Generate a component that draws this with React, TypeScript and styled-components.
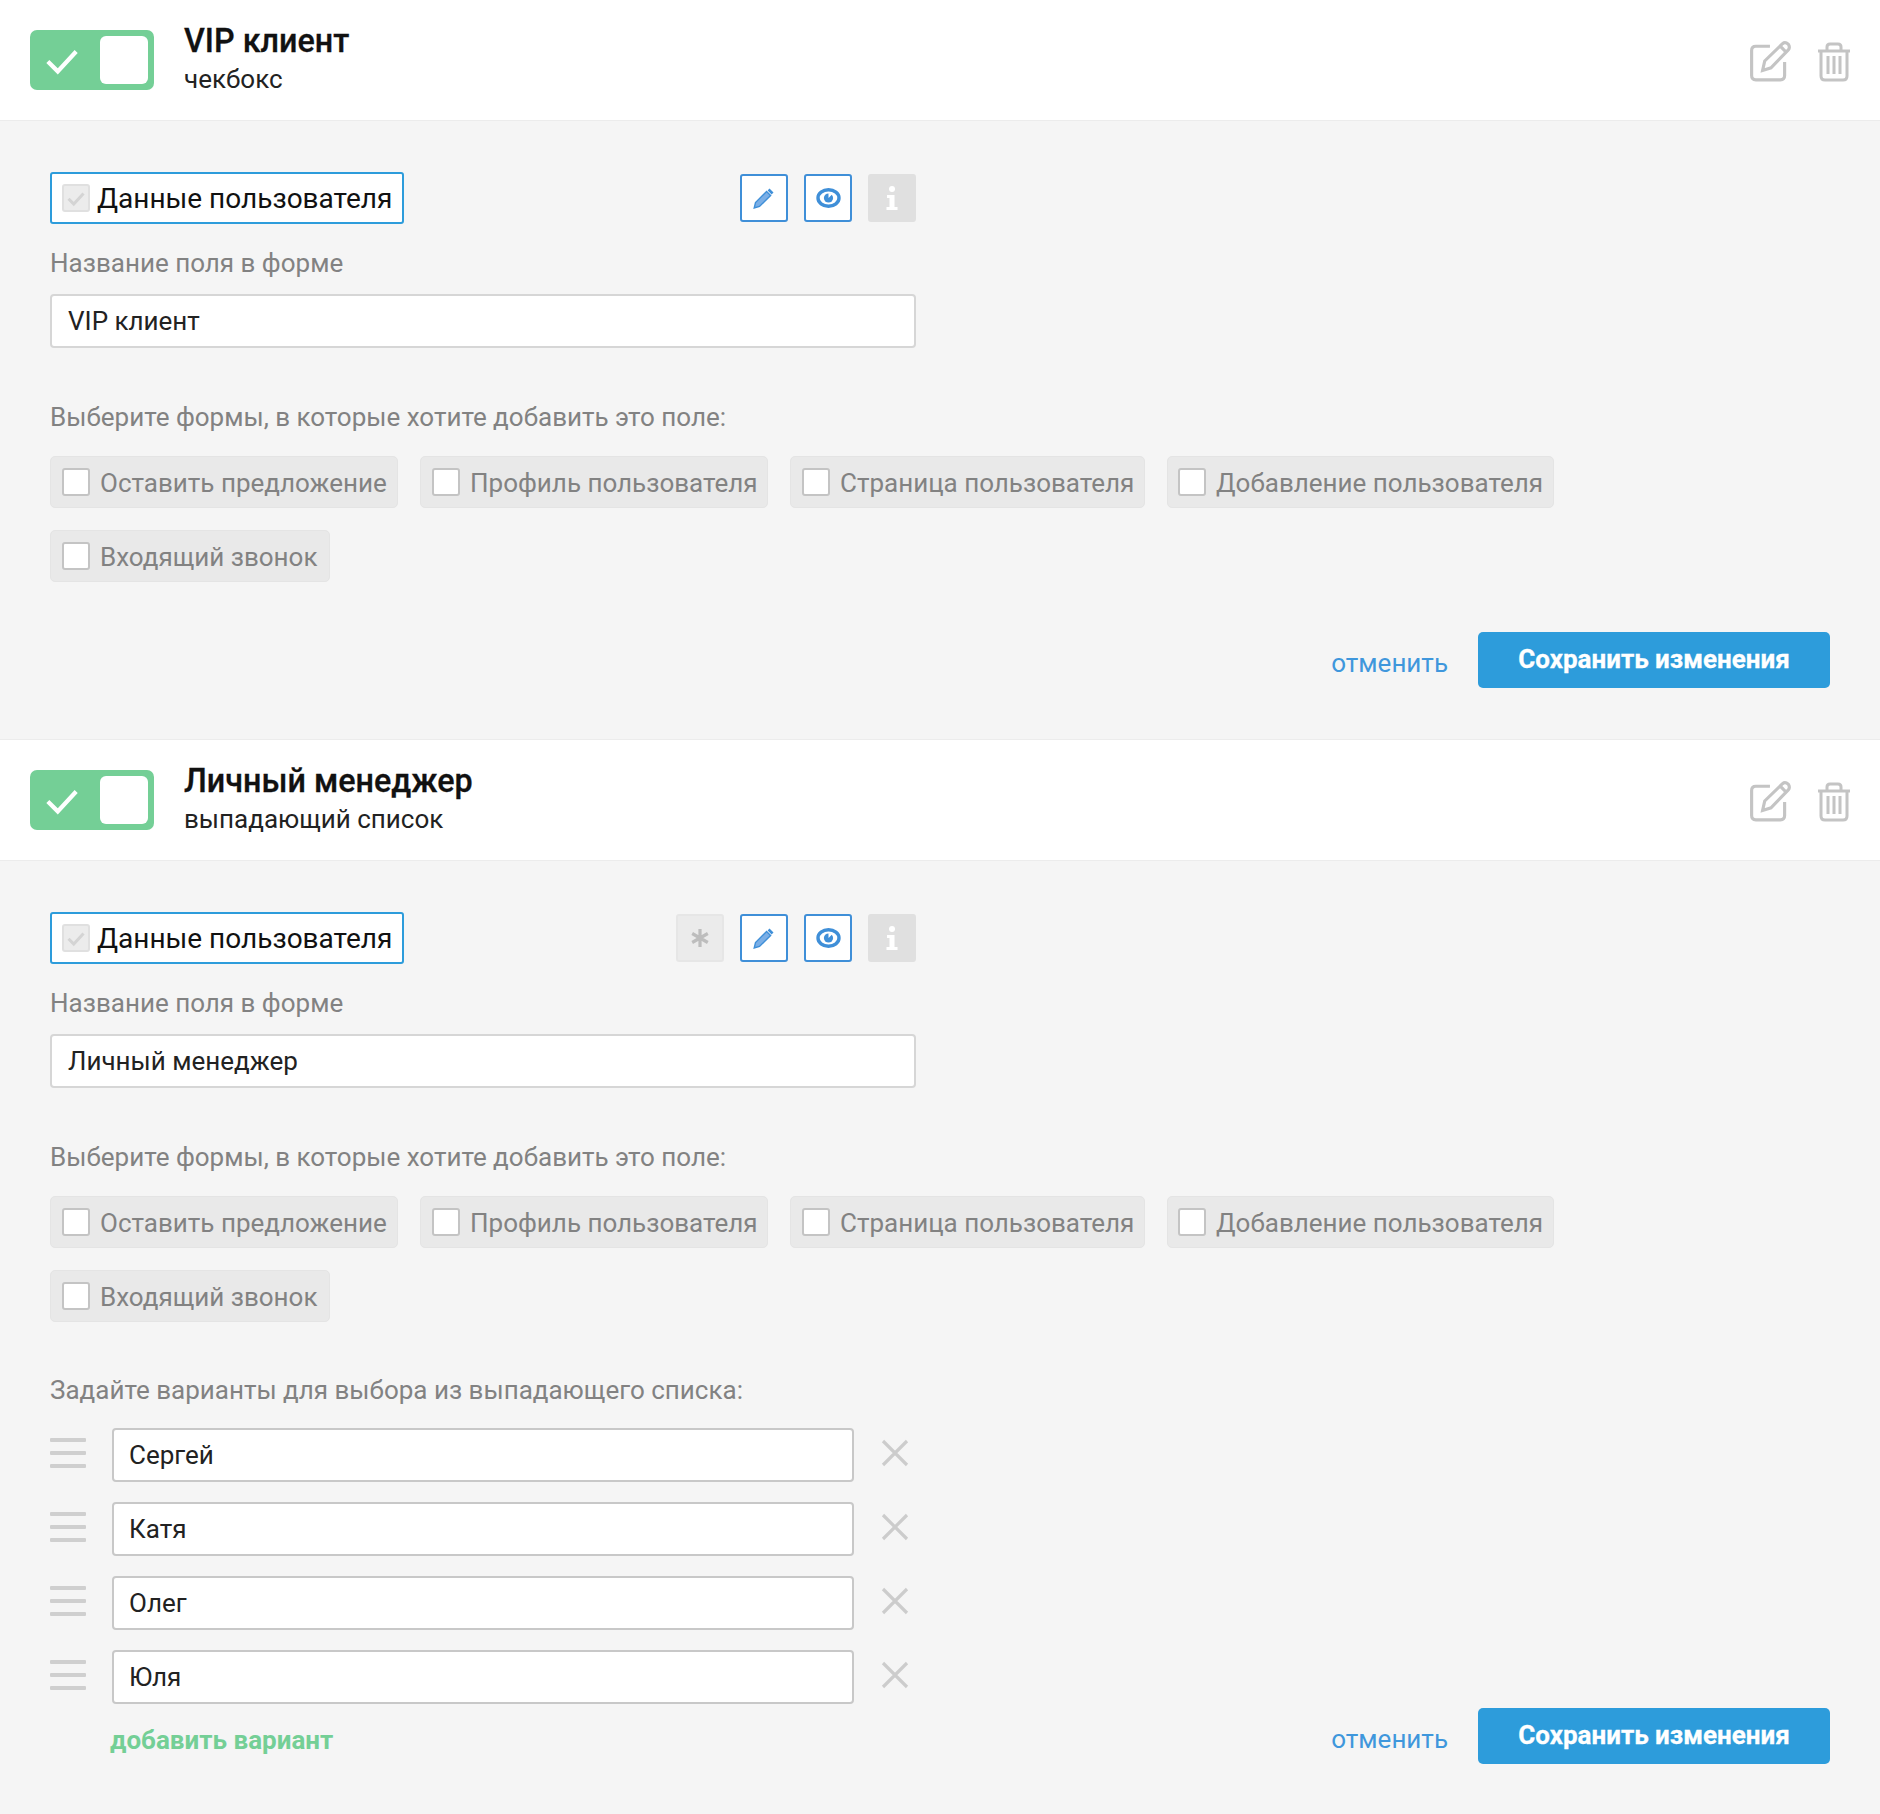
import React from "react";
import styled, { createGlobalStyle } from "styled-components";

const GlobalStyle = createGlobalStyle`
  html, body {
    margin: 0;
    padding: 0;
    background: #f5f5f5;
    font-family: Roboto, "Liberation Sans", sans-serif;
  }
  * {
    box-sizing: border-box;
  }
`;

const Page = styled.div`
  width: 1880px;
  height: 1814px;
  overflow: hidden;
`;

const Header = styled.div`
  height: 121px;
  background: #fff;
  border-bottom: 1px solid #ececec;
  display: flex;
  align-items: center;
  padding: 0 30px;
`;

const Toggle = styled.div`
  width: 124px;
  height: 60px;
  border-radius: 7px;
  background: #74cf96;
  display: flex;
  align-items: center;
  justify-content: space-between;
  padding: 0 6px 0 15px;
  flex-shrink: 0;
`;

const ToggleKnob = styled.div`
  width: 48px;
  height: 48px;
  border-radius: 6px;
  background: #fff;
`;

const TitleBlock = styled.div`
  margin-left: 30px;
  flex: 1;
`;

const Title = styled.div`
  font-size: 32.3px;
  line-height: 36px;
  font-weight: 500;
  color: #111;
  -webkit-text-stroke: 0.3px #111;
  margin-top: -2px;
`;

const Subtitle = styled.div`
  font-size: 26px;
  line-height: 34px;
  color: #222;
  margin-top: 3px;
`;

const HeaderActions = styled.div`
  display: flex;
  align-items: center;
  gap: 24px;
  margin: 4px -1px 0 0;
`;

const Body = styled.div<{ $height: number }>`
  height: ${(p) => p.$height}px;
  padding: 51px 50px 0;
  background: #f5f5f5;
  border-bottom: 1px solid #ececec;
`;

const TopRow = styled.div`
  width: 866px;
  display: flex;
  align-items: center;
  justify-content: space-between;
`;

const MainCheck = styled.div`
  width: 354px;
  height: 52px;
  background: #fff;
  border: 2px solid #2d9cdb;
  border-radius: 3px;
  display: flex;
  align-items: center;
  padding-left: 10px;
  gap: 7px;
  font-size: 28px;
  color: #111;
  white-space: nowrap;
`;

const Box = styled.span<{ $disabled?: boolean }>`
  width: 28px;
  height: 28px;
  border-radius: 3px;
  flex-shrink: 0;
  display: flex;
  align-items: center;
  justify-content: center;
  background: ${(p) => (p.$disabled ? "#ececec" : "#fff")};
  border: 2px solid ${(p) => (p.$disabled ? "#e0e0e0" : "#c4c4c4")};
`;

const IconGroup = styled.div`
  display: flex;
  gap: 16px;
`;

const IconButton = styled.div<{ $variant: "blue" | "grey" | "light" }>`
  width: 48px;
  height: 48px;
  border-radius: 3px;
  display: flex;
  align-items: center;
  justify-content: center;
  background: ${(p) =>
    p.$variant === "blue" ? "#fff" : p.$variant === "grey" ? "#e0e0e0" : "#ebebeb"};
  border: 2px solid
    ${(p) =>
      p.$variant === "blue" ? "#3f8fd8" : p.$variant === "grey" ? "#e0e0e0" : "#e6e6e6"};
`;

const FieldLabel = styled.div<{ $top: number }>`
  font-size: 26px;
  line-height: 28px;
  padding-bottom: 2px;
  color: #828282;
  margin-top: ${(p) => p.$top}px;
`;

const TextField = styled.div<{ $width: number }>`
  width: ${(p) => p.$width}px;
  height: 54px;
  background: #fff;
  border: 2px solid #d6d6d6;
  border-radius: 4px;
  display: flex;
  align-items: center;
  padding-left: 16px;
  font-size: 26px;
  color: #222;
`;

const NameField = styled(TextField)`
  margin-top: 15px;
`;

const Chips = styled.div`
  display: flex;
  flex-wrap: wrap;
  gap: 22px 22px;
  margin-top: 23px;
  width: 1540px;
`;

const Chip = styled.div<{ $width: number; $pad: number }>`
  width: ${(p) => p.$width}px;
  height: 52px;
  border-radius: 5px;
  background: #e9e9e9;
  border: 1px solid #e4e4e4;
  display: flex;
  align-items: center;
  padding-left: ${(p) => p.$pad}px;
  gap: 10px;
  font-size: 26px;
  color: #828282;
  white-space: nowrap;
`;

const ChipText = styled.span`
  margin-top: 2px;
`;

const Footer = styled.div<{ $top: number }>`
  margin-top: ${(p) => p.$top}px;
  display: flex;
  align-items: center;
  justify-content: flex-end;
`;

const CancelLink = styled.a`
  font-size: 26px;
  color: #3f97dc;
  margin-right: 30px;
  position: relative;
  top: 3px;
`;

const SaveButton = styled.button`
  width: 352px;
  height: 56px;
  border: none;
  border-radius: 5px;
  background: #2d9cdb;
  color: #fff;
  font-family: inherit;
  font-size: 26px;
  font-weight: 700;
  -webkit-text-stroke: 0.3px #fff;
  padding: 0 0 2px;
`;

const Options = styled.div`
  display: flex;
  flex-direction: column;
  gap: 20px;
  margin-top: 22px;
`;

const OptionRow = styled.div`
  display: flex;
  align-items: center;
`;

const Handle = styled.div`
  width: 36px;
  margin-right: 26px;
  display: flex;
  flex-direction: column;
  gap: 9px;
  margin-top: -4px;
`;

const HandleBar = styled.span`
  height: 4px;
  background: #cfcfcf;
  border-radius: 1px;
`;

const OptionField = styled(TextField)`
  border-color: #c8c8c8;
  padding-left: 15px;
`;

const Remove = styled.div`
  margin-left: 27px;
  display: flex;
  margin-top: -5px;
`;

const BottomRow = styled.div`
  display: flex;
  align-items: flex-start;
  justify-content: space-between;
  margin-top: 4px;
`;

const AddLink = styled.a`
  font-size: 26px;
  font-weight: 700;
  color: #74cf96;
  margin-left: 60px;
  margin-top: 17px;
`;

const BottomActions = styled(Footer)`
  margin-top: 0;
`;

const CheckMark = ({ size, color, width }: { size: number; color: string; width: number }) => (
  <svg width={size} height={size} viewBox="0 0 24 24" fill="none">
    <path d="M2 13 L9 20 L22 6" stroke={color} strokeWidth={width} />
  </svg>
);

const PencilIcon = () => (
  <svg width="24" height="24" viewBox="0 0 24 24">
    <path d="M17.5 2.5 L21.5 6.5 L19.6 8.4 L15.6 4.4 Z" fill="#3f8fd8" />
    <path
      d="M14.6 5.4 L18.6 9.4 L7.5 20.5 L2.2 22 L3.5 16.5 Z"
      fill="#7aaee6"
      stroke="#3f8fd8"
      strokeWidth="1.4"
    />
  </svg>
);

const EyeIcon = () => (
  <svg width="25" height="22" viewBox="0 0 25 22">
    <ellipse cx="12.5" cy="11" rx="10.5" ry="8.2" fill="none" stroke="#3f8fd8" strokeWidth="3.4" />
    <circle cx="12.5" cy="11" r="4.6" fill="#3f8fd8" />
    <path d="M12.5 11 L16.5 7 L12.5 6 Z" fill="#fff" />
  </svg>
);

const InfoIcon = () => (
  <svg width="14" height="26" viewBox="0 0 14 26">
    <circle cx="7" cy="4" r="3" fill="#fff" />
    <path d="M2 10 H9.5 V22 H12.5 V25 H1.5 V22 H4.5 V13 H2 Z" fill="#fff" />
  </svg>
);

const StarIcon = () => (
  <svg width="20" height="20" viewBox="0 0 20 20" stroke="#bdbdbd" strokeWidth="3.2">
    <path d="M10 1 V19 M2.2 5.5 L17.8 14.5 M17.8 5.5 L2.2 14.5" />
  </svg>
);

const EditIcon = () => (
  <svg width="44" height="44" viewBox="0 0 42 42" fill="none" stroke="#c4c4c4" strokeWidth="3">
    <path d="M20 6 H6.5 Q2.5 6 2.5 10 V34 Q2.5 38 6.5 38 H30 Q34 38 34 34 V21" />
    <path d="M13 29 L15 20 L32 3.5 Q34.5 1.5 37.5 4 Q39.5 7 37.5 9.5 L21 26.5 Z" />
    <path d="M30 6 L35 11" />
  </svg>
);

const TrashIcon = () => (
  <svg width="34" height="40" viewBox="0 0 34 40" fill="none" stroke="#c4c4c4" strokeWidth="3">
    <path d="M1 9 H33" />
    <path d="M10 8 V5 Q10 2 13 2 H21 Q24 2 24 5 V8" />
    <path d="M4 9 V34 Q4 38 8 38 H26 Q30 38 30 34 V9" />
    <path d="M11 14 V32 M17 14 V32 M23 14 V32" />
  </svg>
);

const CloseIcon = () => (
  <svg width="28" height="28" viewBox="0 0 28 28" stroke="#cccccc" strokeWidth="3.2">
    <path d="M2 2 L26 26 M26 2 L2 26" />
  </svg>
);

const forms = [
  { label: "Оставить предложение", width: 348, pad: 11 },
  { label: "Профиль пользователя", width: 348, pad: 11 },
  { label: "Страница пользователя", width: 355, pad: 11 },
  { label: "Добавление пользователя", width: 387, pad: 10 },
  { label: "Входящий звонок", width: 280, pad: 11 },
];

const names = ["Сергей", "Катя", "Олег", "Юля"];

const FormsBlock = () => (
  <>
    <FieldLabel $top={55}>Выберите формы, в которые хотите добавить это поле:</FieldLabel>
    <Chips>
      {forms.map((f) => (
        <Chip key={f.label} $width={f.width} $pad={f.pad}>
          <Box />
          <ChipText>{f.label}</ChipText>
        </Chip>
      ))}
    </Chips>
  </>
);

const CardHeader = ({ title, type }: { title: string; type: string }) => (
  <Header>
    <Toggle>
      <CheckMark size={34} color="#fff" width={3} />
      <ToggleKnob />
    </Toggle>
    <TitleBlock>
      <Title>{title}</Title>
      <Subtitle>{type}</Subtitle>
    </TitleBlock>
    <HeaderActions>
      <EditIcon />
      <TrashIcon />
    </HeaderActions>
  </Header>
);

const TopControls = ({ required }: { required?: boolean }) => (
  <TopRow>
    <MainCheck>
      <Box $disabled>
        <CheckMark size={18} color="#d4d4d4" width={4} />
      </Box>
      Данные пользователя
    </MainCheck>
    <IconGroup>
      {required && (
        <IconButton $variant="light">
          <StarIcon />
        </IconButton>
      )}
      <IconButton $variant="blue">
        <PencilIcon />
      </IconButton>
      <IconButton $variant="blue">
        <EyeIcon />
      </IconButton>
      <IconButton $variant="grey">
        <InfoIcon />
      </IconButton>
    </IconGroup>
  </TopRow>
);

const App: React.FC = () => {
  return (
    <Page>
      <GlobalStyle />
      <CardHeader title="VIP клиент" type="чекбокс" />
      <Body $height={619}>
        <TopControls />
        <FieldLabel $top={25}>Название поля в форме</FieldLabel>
        <NameField $width={866}>VIP клиент</NameField>
        <FormsBlock />
        <Footer $top={50}>
          <CancelLink>отменить</CancelLink>
          <SaveButton>Сохранить изменения</SaveButton>
        </Footer>
      </Body>
      <CardHeader title="Личный менеджер" type="выпадающий список" />
      <Body $height={954}>
        <TopControls required />
        <FieldLabel $top={25}>Название поля в форме</FieldLabel>
        <NameField $width={866}>Личный менеджер</NameField>
        <FormsBlock />
        <FieldLabel $top={54}>Задайте варианты для выбора из выпадающего списка:</FieldLabel>
        <Options>
          {names.map((n) => (
            <OptionRow key={n}>
              <Handle>
                <HandleBar />
                <HandleBar />
                <HandleBar />
              </Handle>
              <OptionField $width={742}>{n}</OptionField>
              <Remove>
                <CloseIcon />
              </Remove>
            </OptionRow>
          ))}
        </Options>
        <BottomRow>
          <AddLink>добавить вариант</AddLink>
          <BottomActions $top={0}>
            <CancelLink>отменить</CancelLink>
            <SaveButton>Сохранить изменения</SaveButton>
          </BottomActions>
        </BottomRow>
      </Body>
    </Page>
  );
};

export default App;
